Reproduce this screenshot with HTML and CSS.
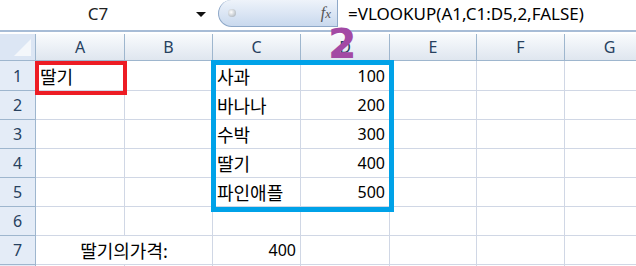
FILE: index.html
```html
<!DOCTYPE html>
<html lang="ko">
<head>
    <meta charset="UTF-8">
    <title>VLOOKUP</title>
    <link rel="stylesheet" href="styles.css">
</head>
<body>
    <div class="formula-bar">
        <div class="name-box">C7</div>
        <div class="name-arrow"></div>
        <div class="fx-pill">
            <span class="dot"></span>
            <span class="fx">f<i>x</i></span>
        </div>
        <div class="formula">=VLOOKUP(A1,C1:D5,2,FALSE)</div>
    </div>

    <div class="sheet">
        <div class="grid">
            <div class="corner"><span class="tri"></span></div>
            <div class="colhead">A</div>
            <div class="colhead">B</div>
            <div class="colhead">C</div>
            <div class="colhead">D</div>
            <div class="colhead">E</div>
            <div class="colhead">F</div>
            <div class="colhead">G</div>

            <div class="rowhead">1</div>
            <div class="cell ko">딸기</div><div class="cell"></div><div class="cell ko">사과</div><div class="cell num">100</div><div class="cell"></div><div class="cell"></div><div class="cell"></div>

            <div class="rowhead">2</div>
            <div class="cell"></div><div class="cell"></div><div class="cell ko">바나나</div><div class="cell num">200</div><div class="cell"></div><div class="cell"></div><div class="cell"></div>

            <div class="rowhead">3</div>
            <div class="cell"></div><div class="cell"></div><div class="cell ko">수박</div><div class="cell num">300</div><div class="cell"></div><div class="cell"></div><div class="cell"></div>

            <div class="rowhead">4</div>
            <div class="cell"></div><div class="cell"></div><div class="cell ko">딸기</div><div class="cell num">400</div><div class="cell"></div><div class="cell"></div><div class="cell"></div>

            <div class="rowhead">5</div>
            <div class="cell"></div><div class="cell"></div><div class="cell ko">파인애플</div><div class="cell num">500</div><div class="cell"></div><div class="cell"></div><div class="cell"></div>

            <div class="rowhead">6</div>
            <div class="cell"></div><div class="cell"></div><div class="cell"></div><div class="cell"></div><div class="cell"></div><div class="cell"></div><div class="cell"></div>

            <div class="rowhead">7</div>
            <div class="cell ko merged">딸기의가격:</div><div class="cell num">400</div><div class="cell"></div><div class="cell"></div><div class="cell"></div><div class="cell"></div>

            <div class="rowhead"></div>
            <div class="cell"></div><div class="cell"></div><div class="cell"></div><div class="cell"></div><div class="cell"></div><div class="cell"></div><div class="cell"></div>
        </div>

        <div class="mark red-box"></div>
        <div class="mark blue-box"></div>
        <div class="mark big-two">2</div>
    </div>
</body>
</html>
```

FILE: styles.css
```css
body {
    margin: 0;
    background-color: #fff;
    font-family: 'Noto Sans', 'Noto Sans CJK KR', sans-serif;
    color: #000;
    overflow: hidden;
}

.formula-bar {
    display: flex;
    align-items: flex-start;
    height: 30px;
    border-bottom: 2px solid #a7bcd6;
    background-color: #fff;
}

.name-box {
    width: 196px;
    height: 30px;
    line-height: 28px;
    text-align: center;
    font-size: 17px;
    color: #222;
}

.name-arrow {
    width: 0;
    height: 0;
    margin-top: 12px;
    border-left: 5px solid transparent;
    border-right: 5px solid transparent;
    border-top: 5px solid #111;
}

.fx-pill {
    display: flex;
    align-items: center;
    justify-content: space-between;
    width: 120px;
    height: 27px;
    margin-left: 12px;
    box-sizing: border-box;
    padding: 0 6px 0 9px;
    border: 1px solid #8ea8c8;
    border-top: none;
    border-radius: 14px 0 0 14px;
    background: linear-gradient(#eef3fa, #c9d9ee);
}

.dot {
    width: 8px;
    height: 8px;
    border-radius: 50%;
    background: radial-gradient(circle at 40% 40%, #fff, #9aa4ae);
}

.fx {
    font-family: 'Liberation Serif', serif;
    font-style: italic;
    font-size: 16px;
    color: #555;
}

.fx i {
    font-size: 13px;
}

.formula {
    margin-left: 10px;
    line-height: 28px;
    font-size: 17px;
    color: #000;
}

.sheet {
    position: relative;
    padding-top: 2px;
}

.grid {
    display: grid;
    grid-template-columns: 36px 89px 88px 88px 89px 87px 88px 90px;
    grid-template-rows: 27px 30px repeat(6, 29px) 10px;
}

.corner {
    position: relative;
    box-sizing: border-box;
    background-color: #dce6f4;
    border-right: 1px solid #9eb6ce;
    border-bottom: 1px solid #9eb6ce;
}

.tri {
    position: absolute;
    right: 4px;
    bottom: 4px;
    width: 0;
    height: 0;
    border-left: 17px solid transparent;
    border-bottom: 17px solid #f4f7fb;
}

.colhead {
    box-sizing: border-box;
    display: flex;
    align-items: center;
    justify-content: center;
    background: linear-gradient(#f9fbfd, #dfe6ef);
    border-right: 1px solid #9eb6ce;
    border-bottom: 1px solid #9eb6ce;
    font-size: 16px;
    color: #27415f;
}

.rowhead {
    box-sizing: border-box;
    display: flex;
    align-items: center;
    justify-content: center;
    background-color: #e4ecf7;
    border-right: 1px solid #9eb6ce;
    border-bottom: 1px solid #9eb6ce;
    font-size: 16px;
    color: #27415f;
}

.cell {
    box-sizing: border-box;
    display: flex;
    align-items: center;
    padding: 0 4px;
    border-right: 1px solid #d0d7e5;
    border-bottom: 1px solid #d0d7e5;
    font-size: 16px;
    white-space: nowrap;
}

.ko {
    font-size: 18px;
}

.num {
    justify-content: flex-end;
}

.merged {
    grid-column: span 2;
    justify-content: center;
}

.mark {
    position: absolute;
}

.red-box {
    left: 35px;
    top: 29px;
    width: 92px;
    height: 34px;
    box-sizing: border-box;
    border: 4px solid #ed1c24;
}

.blue-box {
    left: 211px;
    top: 28px;
    width: 183px;
    height: 152px;
    box-sizing: border-box;
    border: 5px solid #00a2e8;
}

.big-two {
    left: 328px;
    top: -12px;
    font-family: 'DejaVu Sans', sans-serif;
    font-weight: bold;
    font-size: 41px;
    line-height: 1.2;
    color: #a349a4;
}
```
